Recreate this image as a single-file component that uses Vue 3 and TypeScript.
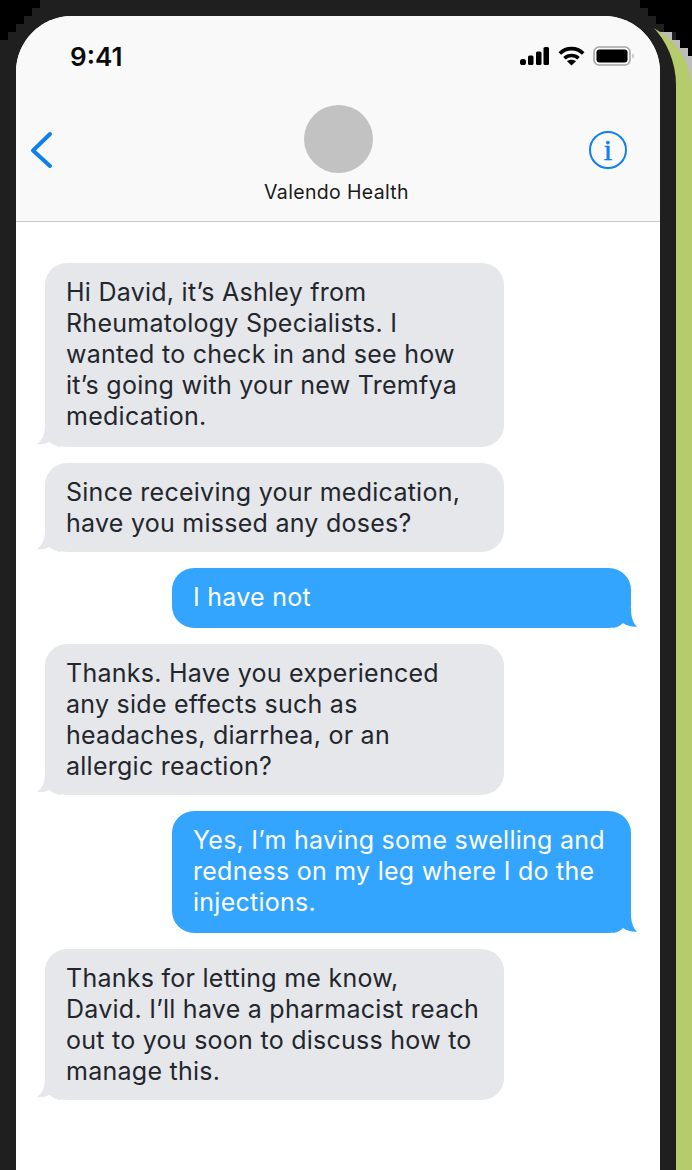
<script setup lang="ts">
interface Message {
  id: number
  side: 'in' | 'out'
  lines: string[]
}

const messages: Message[] = [
  { id: 1, side: 'in', lines: ['Hi David, it’s Ashley from', 'Rheumatology Specialists. I', 'wanted to check in and see how', 'it’s going with your new Tremfya', 'medication.'] },
  { id: 2, side: 'in', lines: ['Since receiving your medication,', 'have you missed any doses?'] },
  { id: 3, side: 'out', lines: ['I have not'] },
  { id: 4, side: 'in', lines: ['Thanks. Have you experienced', 'any side effects such as', 'headaches, diarrhea, or an', 'allergic reaction?'] },
  { id: 5, side: 'out', lines: ['Yes, I’m having some swelling and', 'redness on my leg where I do the', 'injections.'] },
  { id: 6, side: 'in', lines: ['Thanks for letting me know,', 'David. I’ll have a pharmacist reach', 'out to you soon to discuss how to', 'manage this.'] }
]
</script>

<template>
  <div class="stage">
    <div class="plate"></div>
    <div class="edge"></div>
    <div class="card"></div>
    <div class="phone">
      <div class="screen">
        <header class="head">
          <div class="status">
            <span class="time">9:41</span>
            <div class="status-icons">
              <svg width="30" height="18" viewBox="0 0 30 18" fill="#000">
                <rect x="0" y="12" width="6" height="6" rx="2.600" />
                <rect x="8" y="8.500" width="5.500" height="9.500" rx="1.500" />
                <rect x="16" y="4.500" width="5.500" height="13.500" rx="1.500" />
                <rect x="23.500" y="0" width="5.500" height="18" rx="1.500" />
              </svg>
              <svg width="27" height="20" viewBox="0 0 27 20" fill="none" stroke="#000" stroke-width="3.600">
                <path d="M1.800 7.500C8.300 1 18.700 1 25.200 7.500" />
                <path d="M6.500 12.200C10.400 8.500 16.600 8.500 20.500 12.200" />
                <path d="M13.500 19.500L9 15.200C11.500 13.200 15.500 13.200 18 15.200Z" fill="#000" stroke="none" />
              </svg>
              <svg width="42" height="20" viewBox="0 0 42 20">
                <rect x="1" y="1" width="36" height="18" rx="5" fill="none" stroke="#a6a6a6" stroke-width="1.600" />
                <rect x="3.500" y="3.500" width="31" height="13" rx="3" fill="#000" />
                <path d="M39.500 7.500C41 8 41 12 39.500 12.500Z" fill="#a6a6a6" />
              </svg>
            </div>
          </div>
          <div class="nav">
            <svg class="back" width="24" height="38" viewBox="0 0 24 38" fill="none" stroke="#0f80ec" stroke-width="4" stroke-linecap="round" stroke-linejoin="round">
              <path d="M21 3L4 19.500L21 35" />
            </svg>
            <div class="contact">
              <div class="avatar"></div>
              <span class="name">Valendo Health</span>
            </div>
            <div class="info"><span>i</span></div>
          </div>
        </header>
        <main class="thread">
          <div v-for="m in messages" :key="m.id" class="row" :class="m.side">
            <div class="bubble" :class="m.lines.length % 2 ? 'odd' : 'even'">
              <span v-for="(line, i) in m.lines" :key="i" class="line">{{ line }}</span>
              <svg class="tail" width="24" height="24" viewBox="0 0 24 24">
                <path v-if="m.side === 'in'" d="M8 2C8 10 6 17 0 21C4 21.500 8 21 12 18.700C15 21 18 23 24 24L24 2Z" />
                <path v-else d="M6 4C6 11 5 18 0 22.700C5 23 10 22 14 19C16 21 19 23.500 24 24L24 4Z" />
              </svg>
            </div>
          </div>
        </main>
      </div>
    </div>
  </div>
</template>

<style>
html, body { margin: 0; background: #000; }
</style>

<style scoped>
.stage {
  position: relative;
  width: 692px;
  height: 1170px;
  overflow: hidden;
  background: #000;
  font-family: Inter, "Liberation Sans", sans-serif;
}
.plate {
  position: absolute;
  left: 0;
  top: 0;
  width: 676px;
  height: 200px;
  background: #1f1f1f;
  clip-path: polygon(40px 0, 640px 0, 640px 8px, 648px 8px, 648px 16px, 656px 16px, 656px 24px, 664px 24px, 664px 32px, 676px 32px, 676px 200px, 0 200px, 0 40px, 8px 40px, 8px 32px, 16px 32px, 16px 24px, 24px 24px, 24px 16px, 32px 16px, 32px 8px, 40px 8px);
}
.edge {
  position: absolute;
  left: 656px;
  top: 32px;
  width: 36px;
  height: 88px;
  background: #bcbcbc;
  clip-path: polygon(0 0, 16px 0, 16px 8px, 24px 8px, 24px 16px, 32px 16px, 32px 24px, 36px 24px, 36px 88px, 0 88px);
}
.card {
  position: absolute;
  left: 500px;
  top: 21px;
  width: 192px;
  height: 1200px;
  background: #b6cc6c;
  border-radius: 0 69px 0 0;
}
.phone {
  position: relative;
  width: 676px;
  height: 1210px;
  box-sizing: border-box;
  padding: 16px;
  background: #1f1f1f;
  border-radius: 85px 85px 0 0;
}
.screen {
  height: 100%;
  overflow: hidden;
  background: #fff;
  border-radius: 56px 56px 0 0;
}
.head {
  height: 206px;
  box-sizing: border-box;
  background: #f9f9f9;
  border-bottom: 1px solid #c9c9c9;
}
.status {
  height: 80px;
  box-sizing: border-box;
  padding: 0 25px 0 54px;
  display: flex;
  align-items: center;
  justify-content: space-between;
}
.time {
  font-size: 26px;
  font-weight: 600;
  color: #0a0a0a;
}
.status-icons {
  display: flex;
  align-items: center;
  gap: 8px;
}
.nav {
  position: relative;
  display: flex;
  justify-content: center;
}
.back {
  position: absolute;
  left: 13px;
  top: 35px;
}
.contact {
  display: flex;
  flex-direction: column;
  align-items: center;
  gap: 6px;
  margin-top: 9px;
}
.avatar {
  width: 69px;
  height: 68px;
  border-radius: 50%;
  background: #c2c2c2;
}
.name {
  margin-right: 3px;
  font-size: 19.500px;
  line-height: 26px;
  letter-spacing: 0.35px;
  color: #1a1a1a;
}
.info {
  position: absolute;
  right: 33px;
  top: 35px;
  width: 38px;
  height: 38px;
  box-sizing: border-box;
  border: 2.800px solid #0f80ec;
  border-radius: 50%;
  display: flex;
  align-items: center;
  justify-content: center;
  color: #0f80ec;
  font-family: "Liberation Serif", serif;
  font-size: 30px;
  line-height: 1;
  -webkit-text-stroke: 0.5px #0f80ec;
}
.thread {
  display: flex;
  flex-direction: column;
  gap: 16px;
  padding: 41px 29px 0;
}
.row { display: flex; }
.row.out { justify-content: flex-end; }
.bubble {
  position: relative;
  width: 459px;
  box-sizing: border-box;
  padding: 14px 21px 15px;
  border-radius: 22px;
  font-size: 25px;
  line-height: 31px;
  letter-spacing: 0.26px;
  color: #23262b;
  background: #e5e7eb;
}
.bubble.even { padding-bottom: 13px; }
.line {
  display: block;
  white-space: nowrap;
}
.out .bubble {
  background: #33a5ff;
  color: #fff;
}
.tail {
  position: absolute;
  bottom: 0;
  left: -8px;
  fill: #e5e7eb;
}
.out .tail {
  left: auto;
  right: -6px;
  transform: scaleX(-1);
  fill: #33a5ff;
}
</style>
